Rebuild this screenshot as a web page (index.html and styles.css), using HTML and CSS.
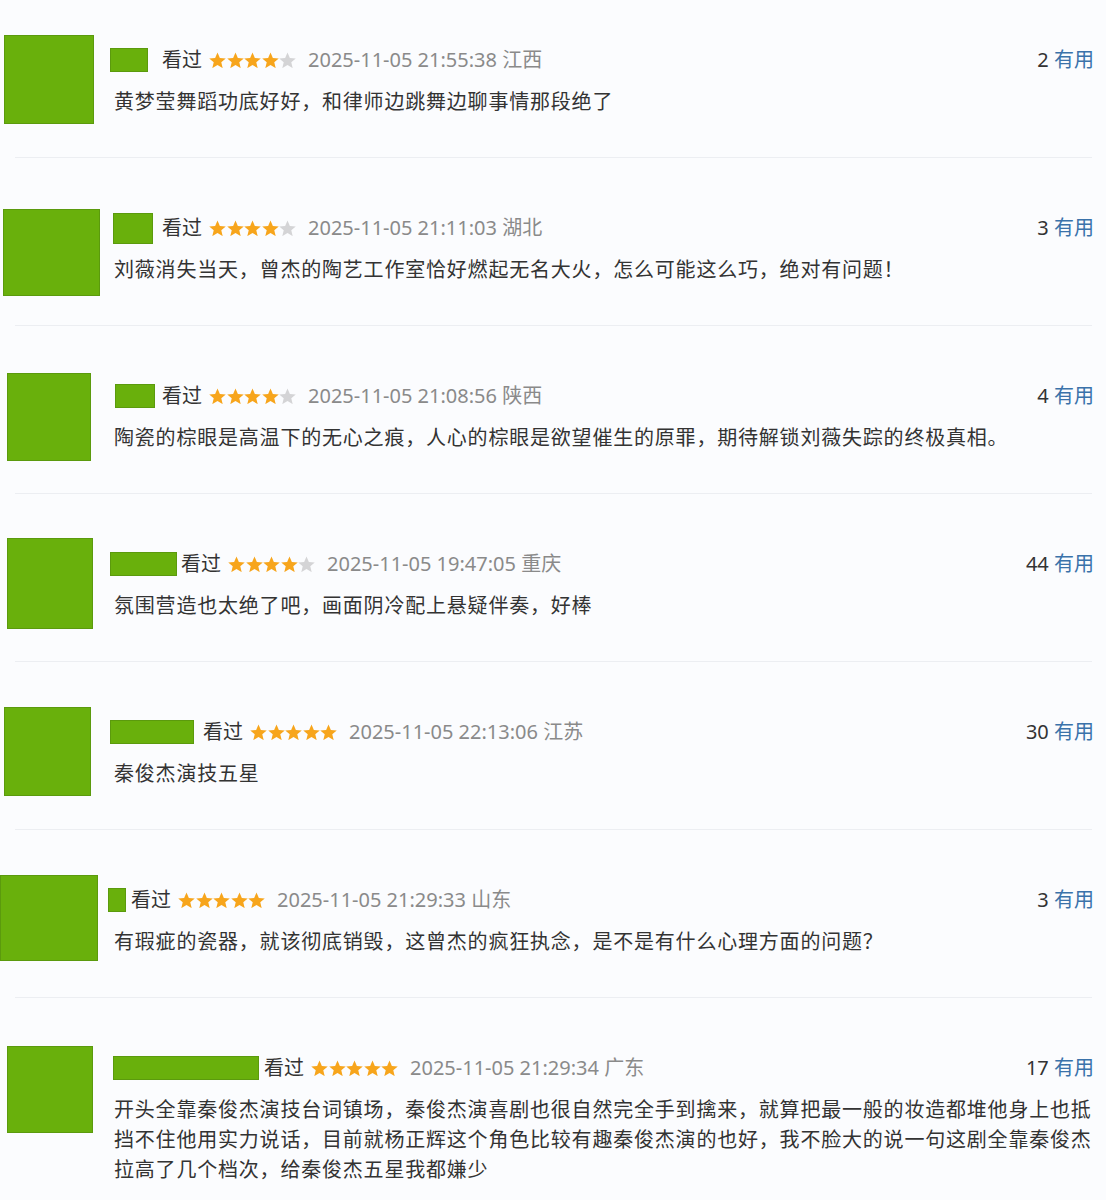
FILE: index.html
```html
<!DOCTYPE html>
<html lang="zh-CN">

<head>
    <meta charset="UTF-8">
    <meta name="viewport" content="width=device-width, initial-scale=1.0">
    <title>短评</title>
    <link rel="stylesheet" href="styles.css">
</head>

<body>
    <!-- star shape, reused by every rating -->
    <svg class="defs" width="0" height="0" aria-hidden="true">
        <symbol id="star" viewBox="1.2 1.4 21.6 20.6">
            <path d="M12 1.8l3 7 7.5.6-5.7 4.9 1.8 7.4L12 17.7l-6.6 4 1.8-7.4-5.7-4.9 7.5-.6z" />
        </symbol>
    </svg>

    <div class="review-list">

        <div class="review">
            <div class="review-main">
                <div class="avatar-col"><div class="avatar avatar-1"></div></div>
                <div class="review-body">
                    <div class="review-head">
                        <span class="name" style="width:38px;margin-right:14px"></span>
                        <span class="watched">看过</span>
                        <span class="stars">
                            <svg class="on"><use href="#star" /></svg><svg class="on"><use href="#star" /></svg><svg class="on"><use href="#star" /></svg><svg class="on"><use href="#star" /></svg><svg class="off"><use href="#star" /></svg>
                        </span>
                        <span class="meta">2025-11-05 21:55:38 江西</span>
                        <span class="votes"><span class="count">2</span> <a class="useful">有用</a></span>
                    </div>
                    <p class="review-text">黄梦莹舞蹈功底好好，和律师边跳舞边聊事情那段绝了</p>
                </div>
            </div>
        </div>

        <div class="review">
            <div class="review-main">
                <div class="avatar-col"><div class="avatar avatar-2"></div></div>
                <div class="review-body">
                    <div class="review-head">
                        <span class="name name-tall" style="width:40px;margin-left:3px;margin-right:9px"></span>
                        <span class="watched">看过</span>
                        <span class="stars">
                            <svg class="on"><use href="#star" /></svg><svg class="on"><use href="#star" /></svg><svg class="on"><use href="#star" /></svg><svg class="on"><use href="#star" /></svg><svg class="off"><use href="#star" /></svg>
                        </span>
                        <span class="meta">2025-11-05 21:11:03 湖北</span>
                        <span class="votes"><span class="count">3</span> <a class="useful">有用</a></span>
                    </div>
                    <p class="review-text">刘薇消失当天，曾杰的陶艺工作室恰好燃起无名大火，怎么可能这么巧，绝对有问题！</p>
                </div>
            </div>
        </div>

        <div class="review">
            <div class="review-main">
                <div class="avatar-col"><div class="avatar avatar-3"></div></div>
                <div class="review-body">
                    <div class="review-head">
                        <span class="name" style="width:40px;margin-left:5px;margin-right:7px"></span>
                        <span class="watched">看过</span>
                        <span class="stars">
                            <svg class="on"><use href="#star" /></svg><svg class="on"><use href="#star" /></svg><svg class="on"><use href="#star" /></svg><svg class="on"><use href="#star" /></svg><svg class="off"><use href="#star" /></svg>
                        </span>
                        <span class="meta">2025-11-05 21:08:56 陕西</span>
                        <span class="votes"><span class="count">4</span> <a class="useful">有用</a></span>
                    </div>
                    <p class="review-text">陶瓷的棕眼是高温下的无心之痕，人心的棕眼是欲望催生的原罪，期待解锁刘薇失踪的终极真相。</p>
                </div>
            </div>
        </div>

        <div class="review">
            <div class="review-main">
                <div class="avatar-col"><div class="avatar avatar-4"></div></div>
                <div class="review-body">
                    <div class="review-head">
                        <span class="name" style="width:67px;margin-right:4px"></span>
                        <span class="watched">看过</span>
                        <span class="stars">
                            <svg class="on"><use href="#star" /></svg><svg class="on"><use href="#star" /></svg><svg class="on"><use href="#star" /></svg><svg class="on"><use href="#star" /></svg><svg class="off"><use href="#star" /></svg>
                        </span>
                        <span class="meta">2025-11-05 19:47:05 重庆</span>
                        <span class="votes"><span class="count">44</span> <a class="useful">有用</a></span>
                    </div>
                    <p class="review-text">氛围营造也太绝了吧，画面阴冷配上悬疑伴奏，好棒</p>
                </div>
            </div>
        </div>

        <div class="review">
            <div class="review-main">
                <div class="avatar-col"><div class="avatar avatar-5"></div></div>
                <div class="review-body">
                    <div class="review-head">
                        <span class="name" style="width:84px;margin-right:9px"></span>
                        <span class="watched">看过</span>
                        <span class="stars">
                            <svg class="on"><use href="#star" /></svg><svg class="on"><use href="#star" /></svg><svg class="on"><use href="#star" /></svg><svg class="on"><use href="#star" /></svg><svg class="on"><use href="#star" /></svg>
                        </span>
                        <span class="meta">2025-11-05 22:13:06 江苏</span>
                        <span class="votes"><span class="count">30</span> <a class="useful">有用</a></span>
                    </div>
                    <p class="review-text">秦俊杰演技五星</p>
                </div>
            </div>
        </div>

        <div class="review">
            <div class="review-main">
                <div class="avatar-col"><div class="avatar avatar-6"></div></div>
                <div class="review-body">
                    <div class="review-head">
                        <span class="name" style="width:18px;margin-left:-2px;margin-right:5px"></span>
                        <span class="watched">看过</span>
                        <span class="stars">
                            <svg class="on"><use href="#star" /></svg><svg class="on"><use href="#star" /></svg><svg class="on"><use href="#star" /></svg><svg class="on"><use href="#star" /></svg><svg class="on"><use href="#star" /></svg>
                        </span>
                        <span class="meta">2025-11-05 21:29:33 山东</span>
                        <span class="votes"><span class="count">3</span> <a class="useful">有用</a></span>
                    </div>
                    <p class="review-text">有瑕疵的瓷器，就该彻底销毁，这曾杰的疯狂执念，是不是有什么心理方面的问题？</p>
                </div>
            </div>
        </div>

        <div class="review">
            <div class="review-main">
                <div class="avatar-col"><div class="avatar avatar-7"></div></div>
                <div class="review-body">
                    <div class="review-head">
                        <span class="name" style="width:146px;margin-left:3px;margin-right:5px"></span>
                        <span class="watched">看过</span>
                        <span class="stars">
                            <svg class="on"><use href="#star" /></svg><svg class="on"><use href="#star" /></svg><svg class="on"><use href="#star" /></svg><svg class="on"><use href="#star" /></svg><svg class="on"><use href="#star" /></svg>
                        </span>
                        <span class="meta">2025-11-05 21:29:34 广东</span>
                        <span class="votes"><span class="count">17</span> <a class="useful">有用</a></span>
                    </div>
                    <p class="review-text">开头全靠秦俊杰演技台词镇场，秦俊杰演喜剧也很自然完全手到擒来，就算把最一般的妆造都堆他身上也抵挡不住他用实力说话，目前就杨正辉这个角色比较有趣秦俊杰演的也好，我不脸大的说一句这剧全靠秦俊杰拉高了几个档次，给秦俊杰五星我都嫌少</p>
                </div>
            </div>
        </div>

    </div>
</body>

</html>
```

FILE: styles.css
```css
body {
    font-family: "Noto Sans", "Noto Sans CJK SC", sans-serif;
    background-color: #fbfcfe;
    color: #333;
    margin: 0;
    padding: 0;
}

.defs {
    position: absolute;
}

.review-list {
    width: 1100px;
}

.review {
    padding-top: 47px;
}

.review:first-child {
    padding-top: 37px;
}

/* faint divider under each review */
.review::after {
    content: "";
    display: block;
    height: 1px;
    margin: 0 8px 0 15px;
    background-color: #eceef2;
}

.review:last-child::after {
    display: none;
}

.review-main {
    display: flex;
}

.avatar-col {
    width: 110px;
    flex-shrink: 0;
}

.avatar {
    width: 88px;
    height: 88px;
    margin-left: 5px;
    background-color: #69b00c;
    border: 1px solid #5b9a0d;
    box-sizing: border-box;
}

.avatar-1 { width: 90px; margin-left: 4px; margin-top: -2px; height: 89px; }
.avatar-2 { width: 97px; margin-left: 3px; margin-top: 4px; height: 87px; }
.avatar-3 { width: 84px; margin-left: 7px; }
.avatar-4 { width: 86px; margin-left: 7px; margin-top: -3px; height: 91px; }
.avatar-5 { width: 87px; margin-left: 4px; margin-top: -2px; height: 89px; }
.avatar-6 { width: 98px; margin-left: 0; margin-top: -2px; height: 86px; }
.avatar-7 { width: 86px; margin-left: 7px; margin-top: 1px; height: 87px; }

.review-body {
    width: 988px;
    padding: 8px 0 40px;
}

.review-head {
    display: flex;
    align-items: center;
    height: 30px;
    line-height: 30px;
    font-size: 20px;
    padding-right: 4px;
}

.name {
    display: block;
    height: 24px;
    background-color: #69b00c;
    border: 1px solid #5b9a0d;
    box-sizing: border-box;
}

.name-tall {
    height: 31px;
}

.watched {
    color: #333;
}

.stars {
    display: flex;
    gap: 0.5px;
    margin-left: 7px;
    margin-right: 12px;
}

.stars svg {
    width: 17px;
    height: 16.5px;
}

.stars .on {
    fill: #f7a51c;
}

.stars .off {
    fill: #d4d4d6;
}

.meta {
    color: #8a8a8a;
}

.votes {
    margin-left: auto;
    white-space: pre;
}

.count {
    color: #333;
}

.useful {
    color: #3a72aa;
}

.review-text {
    margin: 12px 0 0 4px;
    font-size: 20px;
    line-height: 30px;
    letter-spacing: 0.8px;
    color: #333;
}
```
